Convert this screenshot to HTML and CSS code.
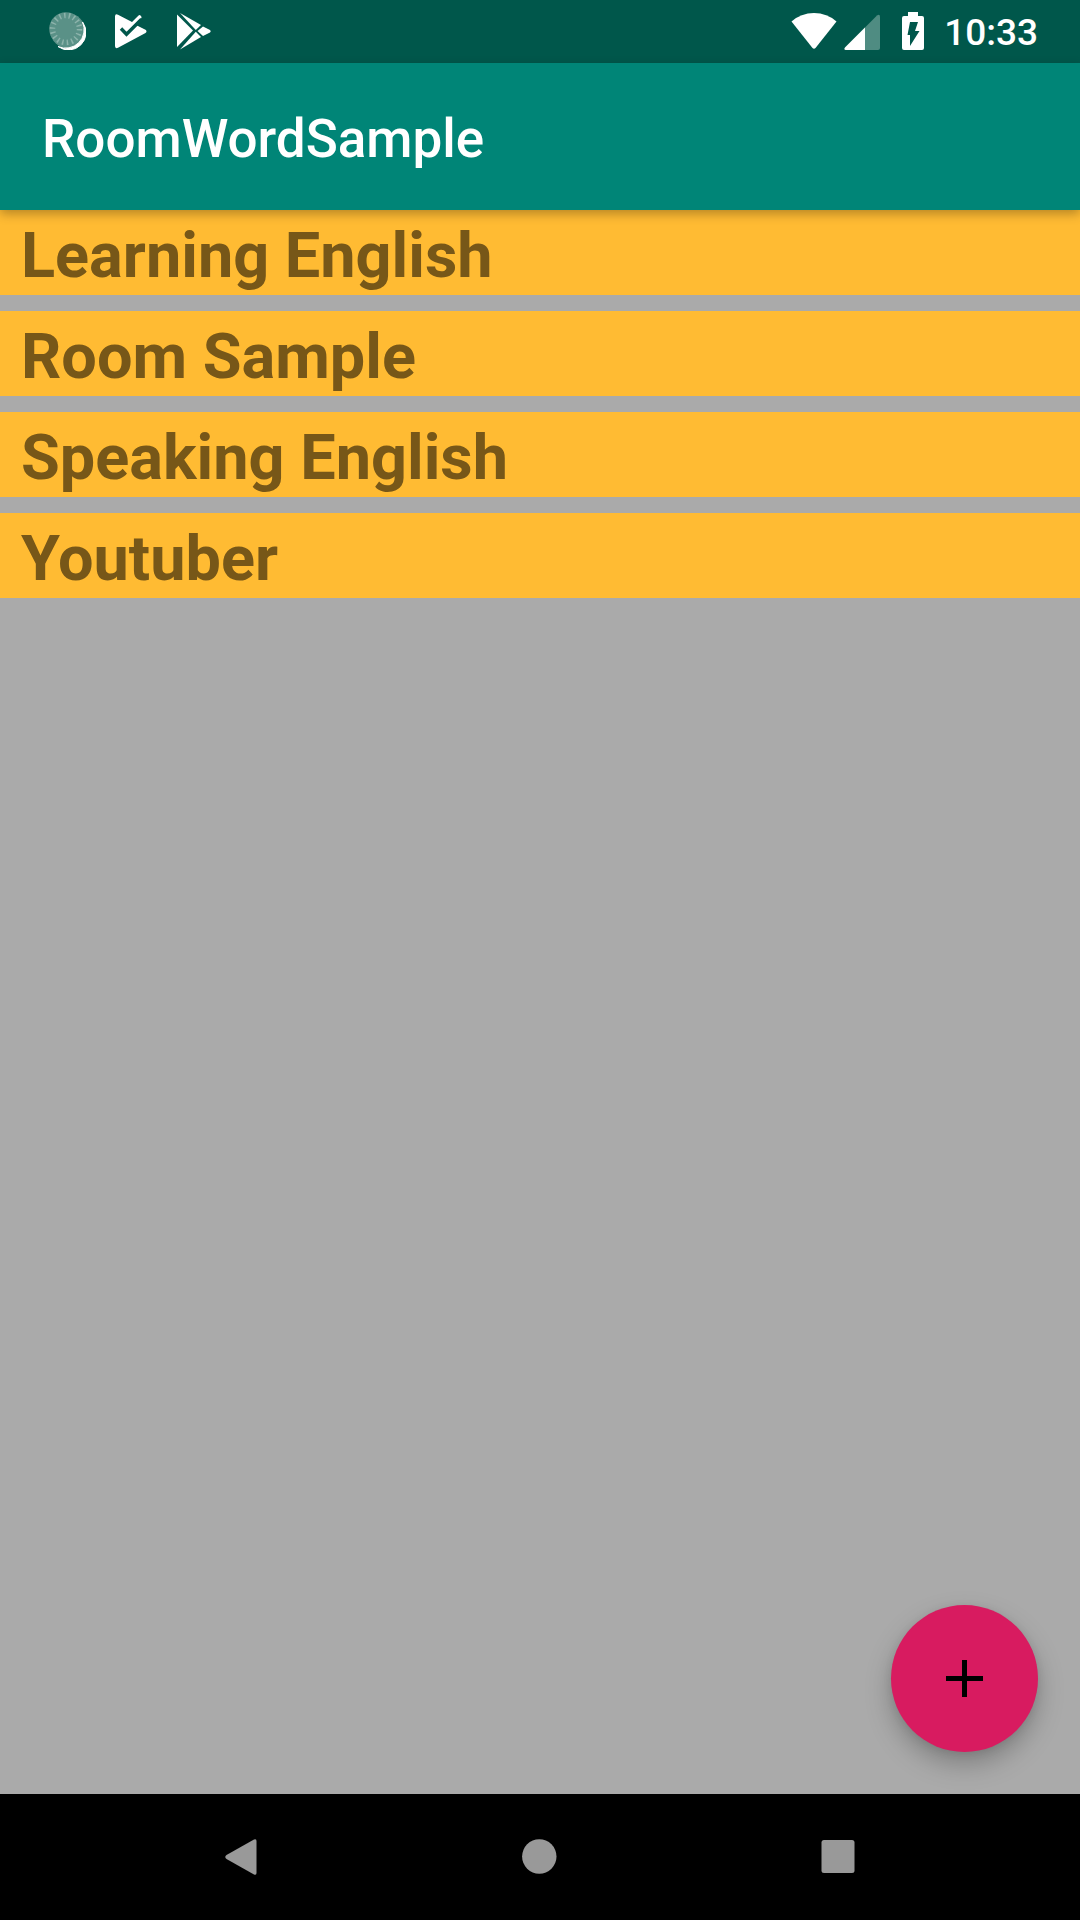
FILE: index.html
```html
<!DOCTYPE html>
<html lang="en">
<head>
<meta charset="utf-8">
<meta name="viewport" content="width=device-width, initial-scale=1">
<title>RoomWordSample</title>
<link rel="stylesheet" href="styles.css">
</head>
<body>
<div class="screen">
  <div class="status-bar">
    <div class="notifications">
      <svg width="40" height="40" viewBox="0 0 40 40" aria-hidden="true">
        <circle cx="22" cy="21" r="17.500" fill="#5a9187"/>
        <path d="M36.500 12A17.500 17.500 0 0 1 12 36.500A18.500 18.500 0 0 0 36.500 12Z" fill="#fff" stroke="#fff"/>
        <circle cx="20" cy="19" r="16.800" fill="#5a9187"/>
        <circle cx="20" cy="19" r="13.500" fill="none" stroke="#8cb3ab" stroke-width="5.500" stroke-dasharray="1.500 3.212"/>
      </svg>
      <svg width="34" height="40" viewBox="0 0 34 40" aria-hidden="true">
        <path d="M1 6.500Q1 3.500 4 4.700L18 12L24.300 5.700Q25.500 4.500 26.500 5.500L27.300 6.500Q28 7.500 27 8.500L22 15L31.500 19.800Q33.500 21.500 31.500 23L4 37.800Q1 39 1 36Z" fill="#fff"/>
        <path d="M7 18.500L12.500 24.200L27.500 9.200" fill="none" stroke="#00574b" stroke-width="3.400"/>
      </svg>
      <svg width="36" height="40" viewBox="0 0 36 40" aria-hidden="true">
        <g fill="#fff">
          <path d="M1 4.500L17 20.500L1 37Z"/>
          <path d="M4 3L25 15L19.800 20Z"/>
          <path d="M4 39.500L25 27L19.800 21.800Z"/>
          <path d="M27 16.500L34 20Q35.500 21.200 34 22.500L27 26L21.500 21Z"/>
        </g>
      </svg>
    </div>
    <div class="system">
      <svg class="wifi" width="46" height="40" viewBox="0 0 46 40" aria-hidden="true">
        <path d="M.5 11.500Q10 3 23 3T45.500 11.500L24.500 38Q23 39.500 21.500 38Z" fill="#fff"/>
      </svg>
      <svg width="36" height="40" viewBox="0 0 36 40" aria-hidden="true">
        <path d="M33 5.500Q36 3.500 36 7V38Q36 40 34 40H2Q-.500 40 1 37.500Z" fill="#4f8c82"/>
        <path d="M21 17.500V40H2Q-.500 40 1 37.500Z" fill="#fff"/>
      </svg>
      <svg width="24" height="40" viewBox="-2 0 24 40" aria-hidden="true">
        <path d="M6 2H16V6H20Q22 6 22 8V38Q22 40 20 40H2Q0 40 0 38V8Q0 6 2 6H6Z" fill="#fff"/>
        <path d="M8 12H16L13 21H17.500L8 36V25H5.500Z" fill="#00574b"/>
      </svg>
      <time class="clock">10:33</time>
    </div>
  </div>
  <header class="app-bar">
    <h1 class="title">RoomWordSample</h1>
  </header>
  <main class="content">
    <ul class="words">
      <li class="word">Learning English</li>
      <li class="word">Room Sample</li>
      <li class="word">Speaking English</li>
      <li class="word">Youtuber</li>
    </ul>
    <button class="fab" type="button" aria-label="Add word">
      <svg width="37" height="37" viewBox="0 0 37 37" aria-hidden="true"><path d="M16 0h5v16h16v5H21v16h-5V21H0v-5h16Z" fill="#000"/></svg>
    </button>
  </main>
  <nav class="nav-bar">
    <button class="nav-button" type="button" aria-label="Back">
      <svg width="36" height="36" viewBox="0 0 36 36" aria-hidden="true"><path d="M31 .600Q33.500-.500 33.500 2V34Q33.500 36.500 31 35.400L3.500 20Q1 18 3.500 16Z" fill="#999"/></svg>
    </button>
    <button class="nav-button" type="button" aria-label="Home">
      <svg width="36" height="36" viewBox="0 0 36 36" aria-hidden="true"><circle cx="17.300" cy="17.500" r="17.200" fill="#999"/></svg>
    </button>
    <button class="nav-button" type="button" aria-label="Recent apps">
      <svg width="36" height="36" viewBox="0 0 36 36" aria-hidden="true"><rect x=".5" y="1" width="33" height="33" rx="2.500" fill="#999"/></svg>
    </button>
  </nav>
</div>
</body>
</html>
```
FILE: styles.css
```css
* {
  box-sizing: border-box;
}

body {
  margin: 0;
  font-family: Roboto, "Noto Sans", sans-serif;
}

.screen {
  display: flex;
  flex-direction: column;
  min-height: 100vh;
  background: #aaa;
}

svg {
  display: block;
}

.status-bar {
  display: flex;
  justify-content: space-between;
  height: 63px;
  padding: 10px 42px 0 46px;
  background: #00574b;
  color: #fff;
}

.notifications,
.system {
  display: flex;
  align-items: flex-start;
}

.notifications {
  gap: 28px;
}

.system {
  gap: 20px;
}

.wifi {
  margin-right: -13px;
}

.clock {
  font-size: 37px;
  font-weight: 500;
  line-height: 46px;
}

.app-bar {
  position: relative;
  z-index: 1;
  display: flex;
  align-items: center;
  height: 147px;
  padding: 4px 42px 0;
  background: #008577;
  color: #fff;
  box-shadow: 0 4px 10px rgba(0, 0, 0, 0.28);
}

.title {
  margin: 0;
  font-size: 53px;
  font-weight: 500;
  line-height: 62px;
}

.content {
  position: relative;
  flex: 1;
}

.words {
  display: flex;
  flex-direction: column;
  gap: 16px;
  margin: 0;
  padding: 0;
  list-style: none;
}

.word {
  padding: 7px 21px 0;
  background: #ffbb33;
  color: #775718;
  font-size: 63px;
  font-weight: 700;
  line-height: 78px;
}

.fab {
  position: absolute;
  right: 42px;
  bottom: 42px;
  display: grid;
  place-items: center;
  width: 147px;
  height: 147px;
  padding: 0;
  border: 0;
  border-radius: 50%;
  background: #d81b60;
  box-shadow: 0 12px 26px rgba(0, 0, 0, 0.25), 0 2px 8px rgba(0, 0, 0, 0.08);
}

.nav-bar {
  display: flex;
  justify-content: center;
  height: 126px;
  background: #000;
}

.nav-button {
  display: grid;
  place-items: center;
  width: 299px;
  padding: 0;
  border: 0;
  background: transparent;
}
```
